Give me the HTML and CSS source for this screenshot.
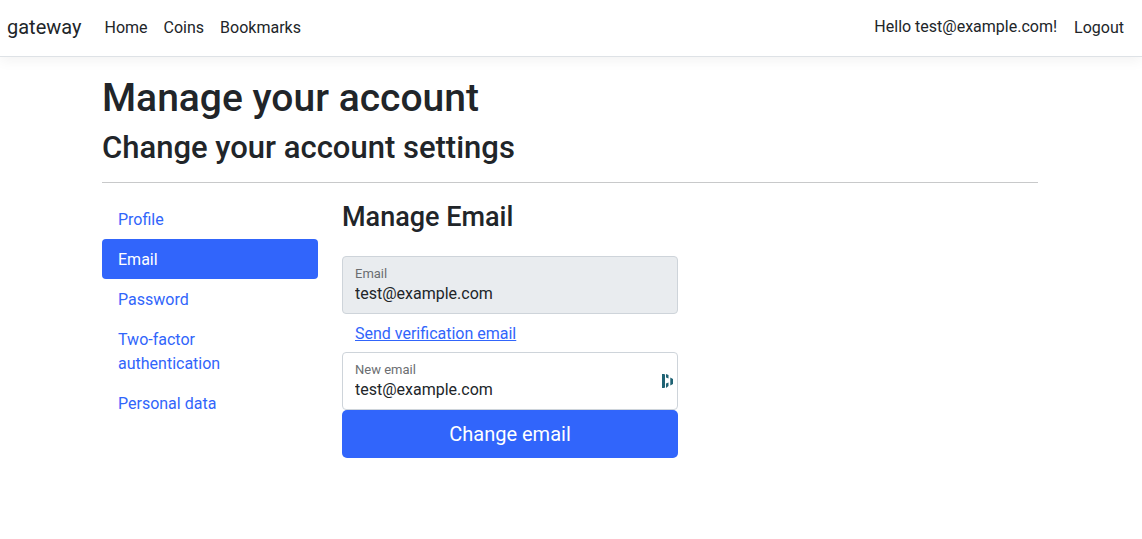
FILE: index.html
```html
<!DOCTYPE html>
<html lang="en">
<head>
<meta charset="utf-8">
<meta name="viewport" content="width=device-width, initial-scale=1">
<title>Manage Email - gateway</title>
<link rel="stylesheet" href="styles.css">
</head>
<body>
<header>
  <nav class="navbar">
    <a class="brand" href="#">gateway</a>
    <ul class="nav-list">
      <li><a href="#">Home</a></li>
      <li><a href="#">Coins</a></li>
      <li><a href="#">Bookmarks</a></li>
    </ul>
    <ul class="nav-list nav-user">
      <li><a href="#">Hello test@example.com!</a></li>
      <li><button class="logout" type="button">Logout</button></li>
    </ul>
  </nav>
</header>
<main class="container">
  <h1>Manage your account</h1>
  <h2>Change your account settings</h2>
  <hr>
  <div class="columns">
    <ul class="pills">
      <li><a href="#">Profile</a></li>
      <li><a class="active" href="#">Email</a></li>
      <li><a href="#">Password</a></li>
      <li><a href="#">Two-factor<br>authentication</a></li>
      <li><a href="#">Personal data</a></li>
    </ul>
    <section class="content">
      <h3>Manage Email</h3>
      <div class="form-row">
        <form class="email-form">
          <div class="field disabled">
            <label for="email">Email</label>
            <input id="email" type="email" value="test@example.com" disabled>
          </div>
          <button class="verify" type="button">Send verification email</button>
          <div class="field">
            <label for="new-email">New email</label>
            <input id="new-email" type="email" value="test@example.com">
            <svg class="manager" viewBox="0 0 12 16" aria-hidden="true"><path d="M0 1h2l1 .6v12.800l-1 .6H0zM4 1l2.500 1v3.500L4 4.500zM4 10.500l2.500-1V13L4 15zM8.300 4.500l2.700 1.500v5l-2.700 1.500z"/></svg>
          </div>
          <button class="submit" type="button">Change email</button>
        </form>
      </div>
    </section>
  </div>
</main>
</body>
</html>
```
FILE: styles.css
```css
* { box-sizing: border-box; }
body {
  margin: 0;
  background: #fff;
  color: #212529;
  font: 16px/24px Roboto, sans-serif;
}
a { color: inherit; text-decoration: none; }
ul { list-style: none; margin: 0; padding: 0; }
button, input { font: inherit; color: inherit; border: 0; background: none; padding: 0; }
button { cursor: pointer; }
.navbar {
  display: flex;
  align-items: center;
  padding: 7px 10px 9px 7px;
  border-bottom: 1px solid #dee2e6;
  box-shadow: 0 4px 12px rgba(0, 0, 0, .05);
}
.brand { font-size: 20px; line-height: 30px; margin-right: 15px; }
.nav-list { display: flex; }
.nav-list a, .logout { display: block; padding: 9px 8px 7px; }
.nav-user { margin-left: auto; gap: 1px; }
.nav-user a { padding: 8px; }
.container { max-width: 960px; margin: 0 auto; padding: 17px 13px 16px 11px; }
h1, h2, h3 { font-weight: 500; margin: 0; }
h1 { font-size: 39px; line-height: 48px; margin-bottom: 7px; }
h2 { font-size: 31px; line-height: 38px; }
h3 { font-size: 27px; line-height: 36px; margin-bottom: 21px; }
hr { border: 0; border-top: 1px solid #c8c9ca; margin: 15px 0 16px; }
.columns { display: grid; grid-template-columns: repeat(12, 1fr); gap: 24px; }
.pills { grid-column: span 3; }
.content { grid-column: span 9; }
.pills a { display: block; padding: 9px 16px 7px; border-radius: 4px; color: #3165fb; }
.pills .active { background: #3165fb; color: #fff; }
.form-row { display: grid; grid-template-columns: 1fr 1fr; gap: 24px; }
.email-form { display: flex; flex-direction: column; }
.field {
  position: relative;
  display: flex;
  flex-direction: column;
  padding: 9px 12px 7px;
  border: 1px solid #ced4da;
  border-radius: 4px;
}
.disabled { background: #e9ecef; }
.field label { font-size: 13px; line-height: 16px; color: #6b6e71; }
.field input { width: 100%; line-height: 24px; }
.manager { position: absolute; right: 3px; top: 20px; width: 12px; height: 16px; fill: #1f6374; }
.verify { text-align: left; padding: 8px 13px 6px; color: #3165fb; text-decoration: underline; }
.submit { background: #3165fb; color: #fff; font-size: 20px; line-height: 30px; padding: 9px 16px; border-radius: 5px; }
```
